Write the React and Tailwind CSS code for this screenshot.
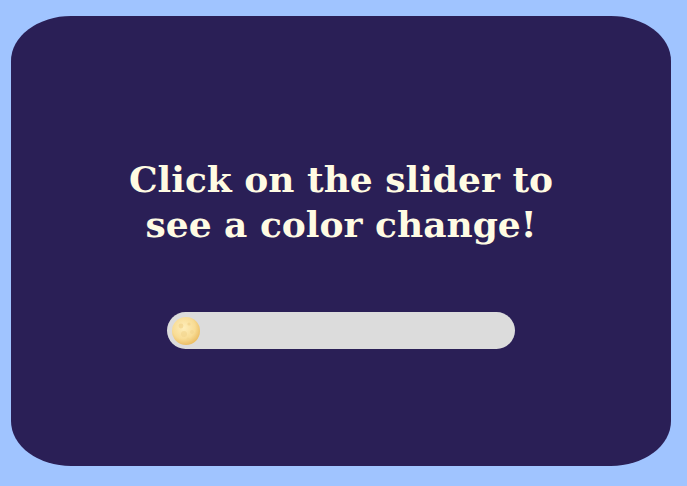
import React from 'react';

const Moon = () => (
  <svg width="30" height="30" viewBox="0 0 30 30">
    <defs>
      <radialGradient id="moonFill" cx="42%" cy="38%" r="62%">
        <stop offset="0%" stopColor="#feeebb" />
        <stop offset="65%" stopColor="#f8dc95" />
        <stop offset="100%" stopColor="#ecbf66" />
      </radialGradient>
    </defs>
    <circle cx="15" cy="15" r="14" fill="url(#moonFill)" />
    <circle cx="10" cy="10" r="2.4" fill="#f1d38c" opacity="0.7" />
    <circle cx="18" cy="8" r="1.6" fill="#f1d38c" opacity="0.7" />
    <circle cx="13" cy="18" r="3" fill="#f1d38c" opacity="0.6" />
    <circle cx="21" cy="16" r="2" fill="#f1d38c" opacity="0.6" />
    <circle cx="17" cy="23" r="1.5" fill="#f1d38c" opacity="0.6" />
  </svg>
);

export default function App() {
  return (
    <div className="min-h-screen w-full bg-[#a0c4ff] pt-4 px-[11px] pb-5">
      <div className="h-[450px] w-[660px] rounded-[60px/45px] bg-[#2a1f56] flex flex-col items-center">
        <h1
          className="mt-[141px] text-center text-[36px] leading-[45px] font-bold text-[#fffbe3]"
          style={{ fontFamily: '"DejaVu Serif", Georgia, serif' }}
        >
          Click on the slider to
          <br />
          see a color change!
        </h1>
        <div className="mt-[65px] w-[348px] h-[37px] rounded-full bg-[#dcdcdc] flex items-center pl-1">
          <Moon />
        </div>
      </div>
    </div>
  );
}
